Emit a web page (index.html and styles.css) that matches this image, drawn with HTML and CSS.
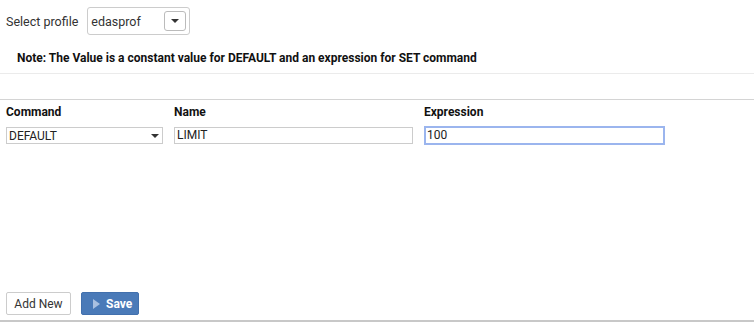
FILE: index.html
```html
<!DOCTYPE html>
<html>
  <head>
    <meta charset="utf-8">
    <title>Profile settings</title>
    <link rel="stylesheet" href="styles.css">
  </head>
  <body>
    <div class="top">
      <span class="top-label">Select profile</span>
      <div class="profile">
        <span>edasprof</span>
        <span class="profile-btn"><i class="caret"></i></span>
      </div>
    </div>
    <p class="note">Note: The Value is a constant value for DEFAULT and an expression for SET command</p>
    <div class="gap"></div>
    <div class="grid">
      <div class="col col-cmd">
        <label>Command</label>
        <div class="sel"><span>DEFAULT</span><i class="caret"></i></div>
      </div>
      <div class="col col-name">
        <label>Name</label>
        <div class="inp">LIMIT</div>
      </div>
      <div class="col col-expr">
        <label>Expression</label>
        <div class="inp focus">100</div>
      </div>
    </div>
    <div class="bottom">
      <button class="btn btn-add">Add New</button>
      <button class="btn btn-save"><i class="play"></i>Save</button>
    </div>
  </body>
</html>
```

FILE: styles.css
```css
*{
  margin: 0;
  padding: 0;
  box-sizing: border-box;
}
body{
  width: 754px;
  height: 322px;
  background: #fff;
  font-family: Roboto, "Liberation Sans", sans-serif;
  color: #222;
  display: flex;
  flex-direction: column;
}
.top{
  display: flex;
  align-items: center;
  padding: 7px 0 0 6px;
}
.top-label{
  font-size: 12.5px;
  color: #333;
  margin-right: 9px;
}
.profile{
  width: 103px;
  height: 28px;
  border: 1px solid #ccc;
  border-radius: 3px;
  display: flex;
  align-items: center;
  justify-content: space-between;
  padding: 0 3px 0 3px;
  font-size: 12.5px;
  color: #333;
}
.profile-btn{
  width: 22px;
  height: 20px;
  border: 1px solid #bbb;
  border-radius: 3px;
  display: flex;
  align-items: center;
  justify-content: center;
}
.caret{
  width: 0;
  height: 0;
  border-left: 4px solid transparent;
  border-right: 4px solid transparent;
  border-top: 4px solid #333;
}
.note{
  font-size: 12px;
  font-weight: bold;
  color: #111;
  padding: 16px 0 0 17px;
  height: 39px;
  border-bottom: 1px solid #ebebeb;
}
.gap{
  height: 26px;
  border-bottom: 1px solid #d4d4d4;
}
.grid{
  display: flex;
  padding: 3px 0 0 6px;
  flex: 1;
}
.col{
  display: flex;
  flex-direction: column;
}
.col label{
  font-size: 12px;
  font-weight: bold;
  color: #111;
  height: 24px;
  line-height: 18px;
}
.col-cmd{ width: 168px; }
.col-name{ width: 250px; }
.col-expr{ width: 241px; }
.sel{
  width: 157px;
  height: 17px;
  border: 1px solid #ccc;
  display: flex;
  align-items: center;
  justify-content: space-between;
  padding: 0 3px 0 2px;
  font-size: 12px;
  color: #222;
}
.inp{
  width: 239px;
  height: 17px;
  border: 1px solid #ccc;
  padding: 0 2px;
  font-size: 12px;
  line-height: 15px;
  color: #222;
}
.focus{
  width: 241px;
  height: 19px;
  margin-top: -1px;
  border: 2px solid #9bb5ee;
  padding: 0 1px;
}
.bottom{
  display: flex;
  gap: 10px;
  padding: 0 0 5px 6px;
  border-bottom: 2px solid #c8c8c8;
}
.btn{
  font-family: Roboto, "Liberation Sans", sans-serif;
  font-size: 12px;
  height: 23px;
  background: #fff;
  border: 1px solid #ccc;
  border-radius: 2px;
  color: #333;
}
.btn-add{
  width: 65px;
}
.btn-save{
  width: 58px;
  background: #4a7ab8;
  border-color: #4270ad;
  color: #fff;
  font-weight: bold;
  display: flex;
  align-items: center;
  padding: 0 0 0 11px;
}
.play{
  width: 0;
  height: 0;
  border-top: 5px solid transparent;
  border-bottom: 5px solid transparent;
  border-left: 7px solid #a9c0e0;
  margin-right: 6px;
}
```
